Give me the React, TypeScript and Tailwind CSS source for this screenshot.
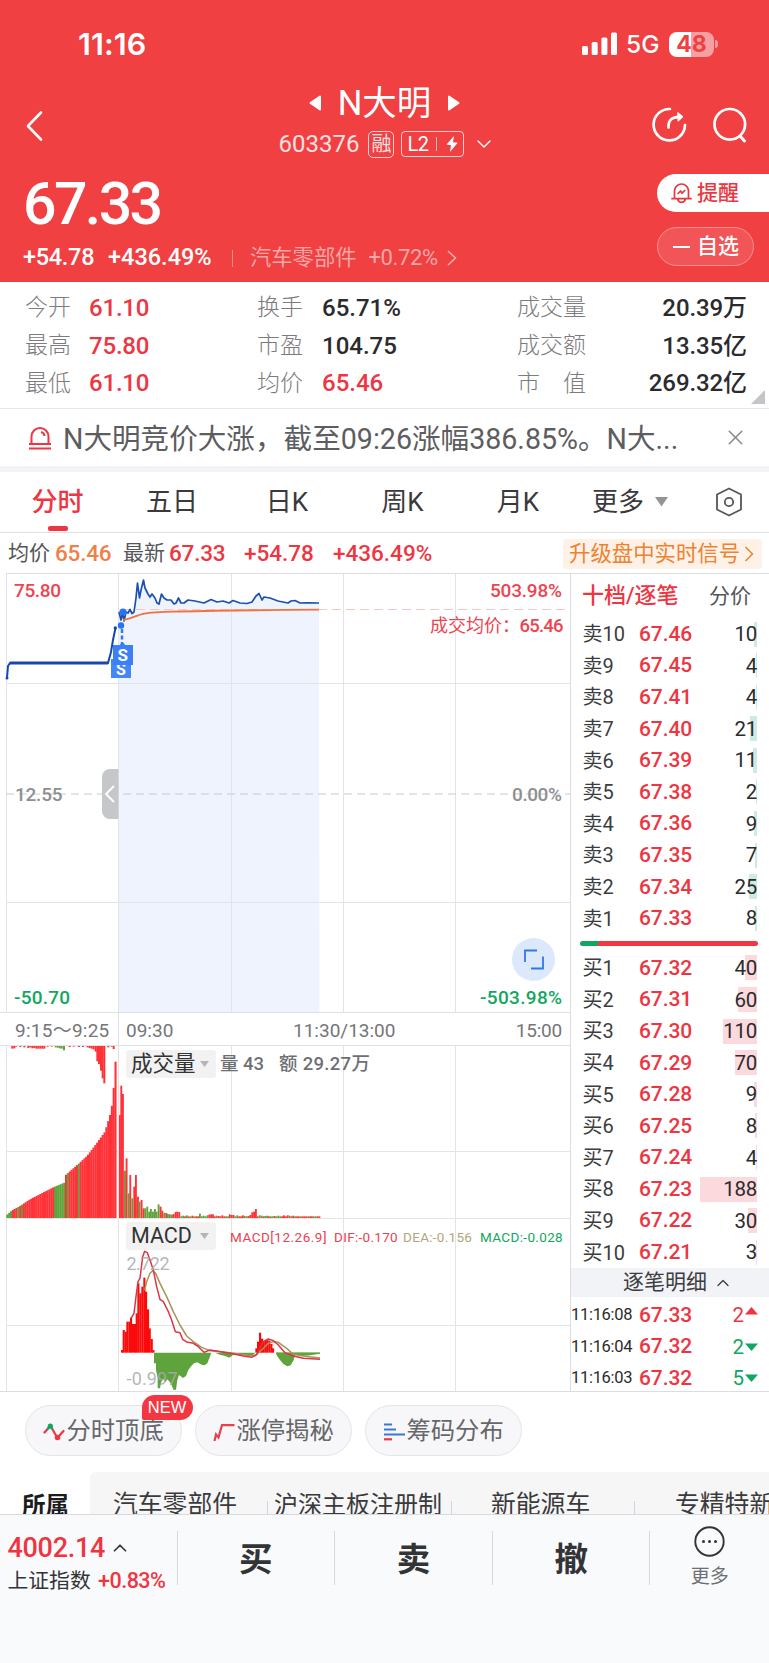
import { ChevronDown, ChevronUp, X } from "lucide-react";

type Level = { label: string; price: string; qty: string; bar: number };
type Bar = [number, number, string];

const RED = "#ff3237";
const GREEN = "#5fa33c";

const asks: Level[] = [
  { label: "卖10", price: "67.46", qty: "10", bar: 3 },
  { label: "卖9", price: "67.45", qty: "4", bar: 1 },
  { label: "卖8", price: "67.41", qty: "4", bar: 1 },
  { label: "卖7", price: "67.40", qty: "21", bar: 7 },
  { label: "卖6", price: "67.39", qty: "11", bar: 4 },
  { label: "卖5", price: "67.38", qty: "2", bar: 1 },
  { label: "卖4", price: "67.36", qty: "9", bar: 3 },
  { label: "卖3", price: "67.35", qty: "7", bar: 2 },
  { label: "卖2", price: "67.34", qty: "25", bar: 8 },
  { label: "卖1", price: "67.33", qty: "8", bar: 2 },
];

const bids: Level[] = [
  { label: "买1", price: "67.32", qty: "40", bar: 12 },
  { label: "买2", price: "67.31", qty: "60", bar: 19 },
  { label: "买3", price: "67.30", qty: "110", bar: 34 },
  { label: "买4", price: "67.29", qty: "70", bar: 22 },
  { label: "买5", price: "67.28", qty: "9", bar: 3 },
  { label: "买6", price: "67.25", qty: "8", bar: 2 },
  { label: "买7", price: "67.24", qty: "4", bar: 1 },
  { label: "买8", price: "67.23", qty: "188", bar: 57 },
  { label: "买9", price: "67.22", qty: "30", bar: 9 },
  { label: "买10", price: "67.21", qty: "3", bar: 1 },
];

const ticks = [
  { time: "11:16:08", price: "67.33", qty: "2", up: true },
  { time: "11:16:04", price: "67.32", qty: "2", up: false },
  { time: "11:16:03", price: "67.32", qty: "5", up: false },
];

// call auction: x, top of the bar
const auction = [
  [20, 585], [35, 572], [60, 558], [90, 538], [160, 502], [193, 488], [197, 465], [235, 432],
  [262, 407], [290, 370], [315, 335], [330, 285], [338, 245], [342, 190], [345, 125], [349, 125],
];

const auctionTop = (x: number) => {
  for (let i = 1; i < auction.length; i++) {
    const [x0, y0] = auction[i - 1];
    const [x1, y1] = auction[i];
    if (x <= x1) return y0 + ((y1 - y0) * (x - x0)) / (x1 - x0);
  }
  return 125;
};

const isGreen = (x: number) =>
  x < 33 || (x > 47 && x < 54) || (x > 59 && x < 66) || (x > 158 && x < 193) || (x > 197 && x < 203.500) || (x > 230 && x < 236);

const auctionBars: Bar[] = [];
for (let x = 19; x < 345; x += 5.5) {
  auctionBars.push([x, auctionTop(x + 3), isGreen(x) ? GREEN : RED]);
}

const hanging: Bar[] = [
  [34, 86, RED], [40, 85, RED], [46, 80, RED], [58, 81, RED], [70, 82, RED], [82, 84, RED], [88, 82, RED], [94, 85, RED],
  [100, 84, RED], [106, 86, RED], [112, 86, RED], [118, 86, RED], [124, 86, RED], [130, 86, RED], [140, 80, RED], [152, 80, RED],
  [164, 82, GREEN], [170, 83, GREEN], [176, 85, GREEN], [182, 86, GREEN], [189, 91, GREEN], [206, 81, RED], [218, 80, RED],
  [234, 81, RED], [246, 81, RED], [260, 82, RED], [266, 84, RED], [272, 86, RED], [278, 88, RED], [284, 95, RED], [289, 124, RED],
  [294, 132, RED], [300, 152, RED], [305, 175, RED], [310, 190, RED], [322, 82, RED], [332, 80, RED], [338, 87, RED],
];

const session: Bar[] = [
  [357, 285, RED], [361, 197, RED], [366, 222, RED], [372, 452, GREEN], [377, 415, RED], [383, 520, GREEN], [388, 465, RED],
  [394, 535, GREEN], [400, 500, RED], [405, 465, RED], [411, 530, RED], [416, 545, GREEN], [422, 540, RED], [428, 565, RED],
  [433, 565, GREEN], [439, 560, GREEN], [445, 575, GREEN], [450, 567, GREEN], [456, 575, GREEN], [462, 567, GREEN],
  [467, 575, GREEN], [473, 553, GREEN], [479, 560, RED], [484, 572, RED], [490, 578, GREEN], [496, 579, RED], [501, 582, GREEN],
  [507, 583, GREEN], [513, 584, GREEN], [518, 582, RED], [524, 576, RED], [529, 575, RED], [535, 576, RED],
];
const tail = "gg2rg3rgr2grrg8gg2gg3r5r6r6rg2r1rr3rggr6r4r4gg3rrr3g1gr1r4r12r14r22rg3g2rg1g2rggr1gg2grr3rr3g2rr2grrgrrrgrrggrr";
let tailX = 541;
for (let i = 0; i < tail.length && tailX < 956; i++) {
  if (/\d/.test(tail[i])) continue;
  const extra = parseInt(tail.slice(i + 1), 10) || 0;
  session.push([tailX, 589 - extra, tail[i] === "g" ? GREEN : RED]);
  tailX += 5.6;
}

const macdUp = [
  [363, 990], [368, 930], [374, 935], [379, 905], [385, 905], [390, 893], [396, 912], [402, 912], [407, 880], [412, 790],
  [418, 820], [424, 800], [430, 773], [435, 815], [441, 868], [446, 925], [452, 957], [457, 990],
  [766, 985], [771, 965], [777, 938], [783, 956], [788, 963], [794, 962], [799, 960], [805, 962], [811, 972], [816, 985],
];
const macdDown =
  "462,998 462,1030 468,1030 468,1050 473,1075 473,1105 480,1105 484,1085 490,1078 497,1087 502,1078 510,1087 516,1098 520,1109 528,1109 532,1080 537,1065 549,1074 558,1068 565,1050 572,1040 582,1030 592,1027 605,1034 614,1036 622,1030 628,1015 634,998 645,998 660,1004 675,1008 688,1013 700,1004 740,1005 752,1008 764,1002 764,998 828,998 830,1006 840,1020 850,1032 862,1039 872,1036 880,1022 886,1004 905,1008 930,1006 960,1001 960,998";

function Signal() {
  return (
    <svg className="h-[24px] w-[36px]" viewBox="0 0 36 24" fill="#fff">
      <rect x="0" y="14" width="6" height="9" rx="1.5" />
      <rect x="9.7" y="10" width="6" height="13" rx="1.5" />
      <rect x="19.4" y="5.4" width="6" height="17.6" rx="1.5" />
      <rect x="29" y="0.6" width="6" height="22.4" rx="1.5" />
    </svg>
  );
}

function Header() {
  return (
    <header className="flex h-[282px] flex-col bg-[#f04042] text-white">
      <div className="flex h-[88px] items-center justify-between pl-[78px] pr-[51px]">
        <span className="font-[Inter] text-[30.5px] font-semibold leading-none tracking-[0.1px]">11:16</span>
        <div className="flex items-center">
          <Signal />
          <span className="ml-[8px] w-[43px] font-[Inter] text-[24.5px] font-medium leading-none">5G</span>
          <div className="flex h-[25px] w-[45px] items-center justify-center rounded-[8px] bg-[linear-gradient(90deg,#fff_49%,#f8a0a1_49%)] font-[Inter] text-[23px] font-bold leading-none text-[#f04042]">
            48
          </div>
          <span className="ml-px h-[8px] w-[3px] rounded-r-full bg-[#f8a0a1]" />
        </div>
      </div>

      <div className="flex h-[78px]">
        <div className="flex w-[240px] items-center pb-[3px] pl-[14px]">
          <svg className="h-[32px] w-[40px]" viewBox="0 0 40 32" fill="none" stroke="#fff" strokeWidth="2.6" strokeLinecap="round" strokeLinejoin="round">
            <path d="M27 2.500 14 16 27 29.500" />
          </svg>
        </div>
        <div className="flex flex-1 flex-col items-center">
          <div className="flex h-[30px] items-center gap-[17px]">
            <svg className="h-[16px] w-[12px]" viewBox="0 0 12 16" fill="#fff" stroke="#fff" strokeWidth="2" strokeLinejoin="round">
              <path d="M11 1.5v13L1.5 8z" />
            </svg>
            <span className="whitespace-nowrap text-[34.5px] leading-none">N大明</span>
            <svg className="h-[16px] w-[12px]" viewBox="0 0 12 16" fill="#fff" stroke="#fff" strokeWidth="2" strokeLinejoin="round">
              <path d="M1 1.5v13L10.5 8z" />
            </svg>
          </div>
          <div className="mt-[12px] flex h-[28px] items-center pl-[6px]">
            <span className="text-[24px] leading-none text-[#fde0e0]">603376</span>
            <span className="ml-[9px] flex h-[27px] w-[26px] items-center justify-center rounded-[5px] border border-[#fbd0d0] text-[20px] leading-none text-[#fde0e0]">融</span>
            <span className="ml-[7px] flex h-[26px] w-[63px] items-center rounded-[4px] border border-[#fbd0d0] pl-[5px]">
              <span className="text-[20px] leading-none tracking-[-0.5px]">L2</span>
              <span className="ml-[8px] h-[14px] w-px bg-[#f9b5b5]" />
              <svg className="ml-[9px] h-[16px] w-[12px]" viewBox="0 0 12 16" fill="#fff">
                <path d="M8 0 0.5 8.5 5 9.2 4 16 11.7 6.8 7 6.2z" />
              </svg>
            </span>
            <ChevronDown className="ml-[8px] h-[24px] w-[24px]" strokeWidth={1.4} />
          </div>
        </div>
        <div className="flex w-[240px] items-center justify-end gap-[26px] pb-[4px] pr-[22px]">
          <svg className="h-[36px] w-[36px]" viewBox="0 0 36 36" fill="none" stroke="#fff" strokeWidth="2.7" strokeLinecap="round" strokeLinejoin="round">
            <path d="M19 2A15.7 15.7 0 1 0 34 18.2" />
            <path d="M17.500 20.500C17.200 13 20.500 10 29 9.800" />
            <path d="M27 5.700 32 9.700 27.300 14z" fill="#fff" strokeWidth="1" />
          </svg>
          <svg className="h-[36px] w-[34px]" viewBox="0 0 34 36" fill="none" stroke="#fff" strokeWidth="2.7" strokeLinecap="round">
            <circle cx="16.800" cy="17.300" r="15.300" />
            <path d="M27 29 31.500 34" strokeWidth="3" />
          </svg>
        </div>
      </div>

      <div className="flex h-[116px] justify-between">
        <div className="flex flex-col pl-[23px]">
          <span className="mt-[8px] text-[59px] font-medium leading-none tracking-[-2.6px]">67.33</span>
          <div className="mt-[8px] flex h-[34px] items-center leading-none">
            <span className="w-[85px] text-[23.5px] font-medium tracking-[-0.3px]">+54.78</span>
            <span className="w-[124px] text-[23.5px] font-medium">+436.49%</span>
            <span className="h-[17px] w-px bg-[#f88c8d]" />
            <span className="ml-[17px] text-[21.3px] text-[#f8a6a6]">汽车零部件</span>
            <span className="ml-[12px] w-[78px] text-[22px] tracking-[-0.4px] text-[#f8a6a6]">+0.72%</span>
            <svg className="h-[16px] w-[10px]" viewBox="0 0 10 16" fill="none" stroke="#fab0b0" strokeWidth="1.5">
              <path d="M1 1l7.5 7L1 15" />
            </svg>
          </div>
        </div>
        <div className="flex w-[112px] flex-col gap-[15px] pt-[8px] leading-none">
          <div className="flex h-[38px] items-center rounded-l-full bg-white pl-[14px] text-[21px] font-medium text-[#e93640]">
            <svg className="mr-[5px] h-[22px] w-[21px]" viewBox="0 0 21 22" fill="none" stroke="#e93640" strokeWidth="1.7" strokeLinecap="round" strokeLinejoin="round">
              <path d="M3.5 16V9a7 7 0 0 1 14 0v7M1 16.7h19M6.5 17c1.5 4.5 6.500 4.500 8 0" />
              <path d="M7 11.500l2.500-2.500 1.500 2.200 2.700-2.700" />
            </svg>
            提醒
          </div>
          <div className="flex h-[39px] w-[97px] items-center rounded-full border border-[#f78f90] bg-[#f25557] pl-[15px] text-[21px] font-medium">
            <span className="mr-[7px] h-[2px] w-[17px] bg-white" />
            自选
          </div>
        </div>
      </div>
    </header>
  );
}

function Stats() {
  const rows = [
    ["今开", "61.10", "换手", "65.71%", "成交量", "20.39万"],
    ["最高", "75.80", "市盈", "104.75", "成交额", "13.35亿"],
    ["最低", "61.10", "均价", "65.46", "市　值", "269.32亿"],
  ];
  return (
    <section className="relative h-[127px] border-b border-[#e6e7ea] pt-[7px]">
      {rows.map((r, i) => (
        <div key={r[0]} className="flex h-[37.700px] items-center pl-[25px] pr-[22px] text-[24px] font-medium leading-none">
          <span className="w-[64px] text-[23px] font-light text-[#7c7c7e]">{r[0]}</span>
          <span className="w-[168px] tracking-[-0.2px] text-[#ee3643]">{r[1]}</span>
          <span className="w-[65px] text-[23px] font-light text-[#7c7c7e]">{r[2]}</span>
          <span className={i === 2 ? "w-[195px] text-[#ee3643]" : "w-[195px] text-[#2b2b2d]"}>{r[3]}</span>
          <span className="w-[70px] whitespace-nowrap text-[23px] font-light text-[#7c7c7e]">{r[4]}</span>
          <span className="flex-1 whitespace-nowrap text-right tracking-[-0.1px] text-[#2b2b2d]">{r[5]}</span>
        </div>
      ))}
      <svg className="absolute bottom-[4px] right-[4px] h-[14px] w-[14px]" viewBox="0 0 14 14">
        <path d="M14 0v14H0z" fill="#c4c5c8" />
      </svg>
    </section>
  );
}

function Notice() {
  return (
    <section className="flex h-[63px] items-center border-b-[6px] border-[#f2f3f6] pl-[29px] pr-[25px]">
      <svg className="h-[24px] w-[22px]" viewBox="0 0 22 24" fill="none" stroke="#ee3643" strokeWidth="2">
        <path d="M2.500 17V10.500a8.500 8.500 0 0 1 17 0V17M0 18h22M0 22.500h22" />
        <path d="M12 6c2 .5 3.300 2 3.500 4" />
      </svg>
      <span className="ml-[12px] flex-1 whitespace-nowrap pt-[4px] text-[28.6px] leading-none text-[#5c5d61]">
        N大明竞价大涨，截至09:26涨幅386.85%。N大...
      </span>
      <X className="-mr-[4px] h-[25px] w-[25px] text-[#8a8b8e]" strokeWidth={1.5} />
    </section>
  );
}

function Tabs() {
  return (
    <nav className="flex h-[61px] items-center border-b border-[#dfe0e3] text-[26px] leading-none text-[#3a3a3c]">
      <div className="relative flex h-full w-[115px] items-center justify-center font-medium text-[#ee3643]">
        分时
        <span className="absolute bottom-[1px] left-[48px] h-[5px] w-[20px] rounded-[2px] bg-[#ee3643]" />
      </div>
      <span className="w-[114px] text-center">五日</span>
      <span className="w-[116px] text-center">日K</span>
      <span className="w-[115px] text-center">周K</span>
      <span className="w-[116px] text-center">月K</span>
      <span className="ml-[16px] w-[63px]">更多</span>
      <svg className="h-[10px] w-[13px]" viewBox="0 0 13 10">
        <path d="M0 0h13L6.500 9.500z" fill="#939497" />
      </svg>
      <svg className="ml-[47px] h-[30px] w-[28px]" viewBox="0 0 28 30" fill="none" stroke="#55565a" strokeWidth="1.8" strokeLinejoin="round">
        <path d="M14 1.500 26 7.500v15L14 28.500 2 22.500v-15z" />
        <circle cx="14" cy="15" r="4.200" />
      </svg>
    </nav>
  );
}

function InfoRow() {
  return (
    <div className="flex h-[40px] items-center pl-[8px] pr-[7px] pt-px text-[22.5px] font-medium leading-none text-[#ee3643]">
      <span className="w-[47px] text-[21px] font-normal text-[#55565a]">均价</span>
      <span className="w-[68px] tracking-[-0.2px] text-[#f0804a]">65.46</span>
      <span className="w-[46px] text-[21px] font-normal text-[#55565a]">最新</span>
      <span className="w-[75px] tracking-[-0.2px]">67.33</span>
      <span className="w-[89px]">+54.78</span>
      <span>+436.49%</span>
      <div className="ml-auto flex h-[30px] w-[199px] items-center rounded-[3px] bg-[#fef2e8] pl-[6px] text-[21.4px] font-normal text-[#f0812f]">
        升级盘中实时信号
        <svg className="ml-[4px] h-[16px] w-[10px]" viewBox="0 0 10 16" fill="none" stroke="#f0812f" strokeWidth="1.5">
          <path d="M1.500 1l7 7-7 7" />
        </svg>
      </div>
    </div>
  );
}

function PriceChart() {
  const line =
    "119,612 121,620 122.500,612 124,621 126,612 128,613 130,609.500 132,613.500 134,612 136,598 137.500,583 139.500,598 141,590 143.500,580 145,588 148,594 150,597 152,594 155,598 157,603 159,604 161.500,594 164,598 167,600 171,600 174,604 176,603 178.500,598 181,603 184,603 188,600 195,601 204,603 211,599.500 217,602 223,601 229,603 233,600.500 240,603 247,603.500 252,602 256,596 259,593.500 262,600 264,597 270,598 278,601 288,603 291,601 295,600.500 300,603 308,602.800 319,603";
  return (
    <svg className="block h-[439px] w-[570px]" viewBox="0 573 570 439" fontFamily="Roboto, 'Noto Sans CJK SC', sans-serif" fontSize="19" fontWeight="500">
      <path d={`M119,612 L${line} L319.500,1012 L119,1012z`} fill="#eef3fe" />
      <path d="M6.500 573V1012M118.500 573V1012M231.500 573V1012M343.500 573V1012M455.500 573V1012M6 683.500H570M6 902.500H570" stroke="#e3e4e8" />
      <path d="M6 573.500H570" stroke="#dcdde1" />
      <path d="M6 794H570" stroke="#c9cacc" strokeDasharray="8 5" />
      <path d="M122 609.500H570" stroke="#f5c6c3" strokeDasharray="9 5" />
      <polyline points="7,678 8,666 10,663 108,663 111,652 113,640 115.500,628" fill="none" stroke="#1549ad" strokeWidth="2" />
      <path d="M10 663H108" stroke="#1549ad" strokeWidth="3" />
      <circle cx="7" cy="678" r="1.500" fill="#1549ad" />
      <circle cx="115.300" cy="628" r="1.700" fill="#1549ad" />
      <polyline points={line} fill="none" stroke="#1b50b0" strokeWidth="1.700" strokeLinejoin="round" />
      <path d="M123 620C130 619 134 617 139 615 150 611.500 165 612 180 611.500 220 610.500 270 610 319 609.700" fill="none" stroke="#f2713f" strokeWidth="1.800" />
      <path d="M122 629V645" stroke="#2f7bf5" strokeWidth="2.500" strokeDasharray="4 2.500" />
      <circle cx="123" cy="612" r="3.600" fill="#2673f5" />
      <circle cx="121" cy="625.500" r="3.200" fill="#2673f5" />
      <path d="M118 647 122.500 642 127 647z" fill="#2f7bf5" />
      <rect x="111" y="659" width="20" height="19" fill="#4687f6" />
      <text x="116" y="675" fontSize="16" fontWeight="700" fill="#fff">S</text>
      <rect x="113" y="645" width="20" height="20" fill="#3b80f6" />
      <text x="117.500" y="661" fontSize="17" fontWeight="700" fill="#fff">S</text>
      <path d="M118.500 769h-8.500a8 8 0 0 0-8 8v34a8 8 0 0 0 8 8h8.500z" fill="#c6c7c9" />
      <path d="M114 786l-8 8 8 8" fill="none" stroke="#fff" strokeWidth="1.800" />
      <text x="14" y="596.500" textLength="47" fill="#ee4450">75.80</text>
      <text x="15" y="800.500" textLength="47.500" fill="#8e8f92">12.55</text>
      <text x="14" y="1004" textLength="56" fill="#12a760">-50.70</text>
      <text x="490" y="596.500" textLength="72" fill="#ee4450">503.98%</text>
      <text x="512" y="800.500" textLength="50" fill="#8e8f92">0.00%</text>
      <text x="480" y="1004" textLength="82" fill="#12a760">-503.98%</text>
      <text x="430" y="631.500" fontSize="18" fontWeight="400" fill="#ee4450">成交均价：</text>
      <text x="519.500" y="631.500" textLength="44" fontSize="18.500" fill="#ee4450">65.46</text>
      <circle cx="533.500" cy="959.500" r="21.500" fill="#dce8fb" />
      <path d="M525 962V950.500H537M543 956.500V968.500H531" fill="none" stroke="#2f78ea" strokeWidth="1.800" />
    </svg>
  );
}

function TimeAxis() {
  return (
    <div className="flex h-[34px] items-center border-y border-[#e0e1e5] text-[19px] leading-none text-[#75767a]">
      <span className="w-[118px] whitespace-nowrap pl-[15px] pt-[2px] tracking-[0.25px]">9:15～9:25</span>
      <div className="flex h-full flex-1 items-center justify-between border-l border-[#e0e1e5] pl-[7px] pr-[8px] pt-[2px]">
        <span className="w-[167px]">09:30</span>
        <span className="flex-1">11:30/13:00</span>
        <span className="tracking-[-0.2px]">15:00</span>
      </div>
    </div>
  );
}

function Selector({ label }: { label: string }) {
  return (
    <div className="absolute left-[126px] top-[4px] flex h-[28px] w-[90px] items-center justify-between rounded-[3px] bg-[#f2f2f3] pl-[5px] pr-[7px] text-[21.5px] leading-none text-[#333]">
      {label}
      <svg className="h-[6px] w-[9px]" viewBox="0 0 9 6">
        <path d="M0 0h9L4.500 6z" fill="#b4b5b8" />
      </svg>
    </div>
  );
}

function VolumeChart() {
  return (
    <div className="relative h-[172px]">
      <svg className="block h-[172px] w-[570px]" viewBox="0 1046 570 172">
        <path d="M6.500 1045V1218M118.500 1045V1218M231.500 1045V1218M343.500 1045V1218M455.500 1045V1218M6 1151.500H570" stroke="#e3e4e8" />
        <g transform="translate(0 1020) scale(0.33333)">
          {hanging.map(([x, y, c]) => (
            <rect key={x} x={x} y={74} width={6} height={y - 74} fill={c} />
          ))}
          {auctionBars.map(([x, y, c]) => (
            <rect key={x} x={x} y={y} width={6.2} height={595 - y} fill={c} />
          ))}
          {session.map(([x, y, c]) => (
            <rect key={x} x={x} y={y} width={5.6} height={595 - y} fill={c} />
          ))}
        </g>
      </svg>
      <Selector label="成交量" />
      <div className="absolute left-[220px] top-[9px] flex text-[18.5px] font-medium leading-none text-[#6e6f73]">
        <span className="w-[59px]">量 43</span>
        <span className="tracking-[0.3px]">额 29.27万</span>
      </div>
    </div>
  );
}

function MacdChart() {
  return (
    <div className="relative h-[174px] border-b border-[#dcdde1]">
      <svg className="block h-[173px] w-[570px]" viewBox="0 1218 570 173" fontFamily="Roboto, sans-serif">
        <path d="M6.500 1218V1392M118.500 1218V1392M231.500 1218V1392M343.500 1218V1392M455.500 1218V1392M6 1218.500H570M6 1325.500H570" stroke="#e3e4e8" />
        <g transform="translate(0 1020) scale(0.33333)">
          {macdUp.map(([x, y]) => (
            <rect key={x} x={x} y={y} width={6.4} height={998 - y} fill="#fa0a0a" />
          ))}
          <polygon points={macdDown} fill={GREEN} />
          <path d="M828 999H960" stroke={GREEN} strokeWidth="3" />
          <polyline
            points="434,810 440,785 450,760 458,752 467,760 480,790 500,830 520,875 540,915 560,948 580,965 605,982 630,992 690,998 730,1004 765,1008 790,985 805,970 820,965 835,967 860,985 880,1003 910,1008 960,1014"
            fill="none" stroke="#a8935a" strokeWidth="4.500" strokeLinejoin="round"
          />
          <polyline
            points="393,895 402,880 408,830 414,785 420,775 428,710 434,694 442,698 450,720 460,750 470,800 480,838 490,845 505,875 515,900 526,935 540,938 548,958 560,966 580,970 595,980 612,997 630,990 645,992 690,1000 730,1008 755,1012 770,1003 790,965 805,957 820,962 835,975 855,998 880,1008 910,1015 960,1018"
            fill="none" stroke="#dd3545" strokeWidth="4.500" strokeLinejoin="round"
          />
        </g>
        <text x="126.500" y="1270" textLength="43" fontSize="18" fill="#a9aaad" opacity="0.85">2.722</text>
        <text x="126.500" y="1385" textLength="51" fontSize="18" fill="#a9aaad" opacity="0.85">-0.997</text>
      </svg>
      <Selector label="MACD" />
      <div className="absolute left-[230px] top-[13px] flex whitespace-nowrap text-[13.5px] leading-none text-[#e94252]">
        <span className="w-[104px] tracking-[0.5px]">MACD[12.26.9]</span>
        <span className="w-[69px] tracking-[0.3px]">DIF:-0.170</span>
        <span className="w-[77px] tracking-[0.3px] text-[#b3a67c]">DEA:-0.156</span>
        <span className="tracking-[0.35px] text-[#12a760]">MACD:-0.028</span>
      </div>
    </div>
  );
}

function LevelRow({ level, buy }: { level: Level; buy?: boolean }) {
  return (
    <div className="relative flex h-[31.600px] shrink-0 items-center pl-[11.500px] pr-[12px] leading-none">
      <span className="w-[56.500px] text-[20px] text-[#3c3d40]">{level.label}</span>
      <span className="text-[21px] font-medium tracking-[-0.1px] text-[#ee3643]">{level.price}</span>
      <span
        className={buy ? "absolute right-[12px] top-[3px] h-[25px] bg-[#fbd9dc]" : "absolute right-[12px] top-[3px] h-[25px] bg-[#cdebe0]"}
        style={{ width: level.bar }}
      />
      <span className="relative ml-auto text-[20.5px] tracking-[-0.3px] text-[#2b2b2d]">{level.qty}</span>
    </div>
  );
}

function OrderBook() {
  return (
    <aside className="flex w-[199px] flex-col overflow-hidden border-b border-l border-t border-[#dcdde1]">
      <div className="flex h-[44.500px] shrink-0 items-center pl-[11px] leading-none">
        <span className="w-[127px] text-[22px] font-medium text-[#ee3643]">十档/逐笔</span>
        <span className="text-[21px] text-[#55565a]">分价</span>
      </div>
      {asks.map((l) => (
        <LevelRow key={l.label} level={l} />
      ))}
      <div className="flex h-[18px] shrink-0 items-center pl-[9px]">
        <span className="h-[5px] w-[178px] rounded-full bg-[linear-gradient(110deg,#12a760_10.500%,#f23743_10.500%)]" />
      </div>
      {bids.map((l) => (
        <LevelRow key={l.label} level={l} buy />
      ))}
      <div className="flex h-[29px] shrink-0 items-center bg-[#f2f3f6] pl-[52px] text-[21px] leading-none text-[#3c3d40]">
        逐笔明细
        <ChevronUp className="ml-[6px] h-[20px] w-[20px]" strokeWidth={1.5} />
      </div>
      <div className="shrink-0 pt-[2px]">
        {ticks.map((t) => (
          <div key={t.time} className="flex h-[31.600px] items-center leading-none">
            <span className="w-[68px] text-[16.500px] tracking-[-0.3px] text-[#2b2b2d]">{t.time}</span>
            <span className="text-[21px] font-medium tracking-[-0.1px] text-[#ee3643]">{t.price}</span>
            <span className={t.up ? "ml-auto text-[20.5px] text-[#ee3643]" : "ml-auto text-[20.5px] text-[#12a760]"}>{t.qty}</span>
            <svg className={t.up ? "mb-[8px] ml-px mr-[11px] h-[8px] w-[13px]" : "ml-px mr-[11px] h-[8px] w-[13px]"} viewBox="0 0 13 8">
              {t.up ? <path d="M0 7.500h13L6.500 0z" fill="#ee3643" /> : <path d="M0 .5h13L6.500 8z" fill="#12a760" />}
            </svg>
          </div>
        ))}
      </div>
    </aside>
  );
}

function Chips() {
  return (
    <div className="flex h-[80px] gap-[13px] pl-[24.500px] pt-[13px] text-[24.3px] leading-none text-[#66676b]">
      <div className="relative flex h-[51px] w-[157px] items-center rounded-full border border-[#e4e5e8] bg-[#f7f7f9] pl-[17px] pt-[2px]">
        <svg className="mr-[2px] h-[18px] w-[22px]" viewBox="0 0 22 18" fill="none" stroke="#ee3643" strokeWidth="2.200" strokeLinecap="round">
          <path d="M1.500 9.500 5 5.500M9 5.500 13 12.500M16 13l4.500-5" />
          <path d="M5 5.500 7.300 2.500 9 5.500" stroke="#12a760" />
          <circle cx="7.300" cy="3.200" r="2.600" fill="#12a760" stroke="none" />
          <circle cx="14.500" cy="14.500" r="2.800" fill="#ee3643" stroke="none" />
        </svg>
        分时顶底
        <span className="absolute -top-[11px] left-[116px] flex h-[25px] w-[51px] items-center justify-center rounded-t-[13px] rounded-br-[13px] rounded-bl-[2px] bg-[#f23743] font-['Liberation_Sans'] text-[16.5px] text-white">
          NEW
        </span>
      </div>
      <div className="flex h-[51px] w-[157px] items-center rounded-full border border-[#e4e5e8] bg-[#f7f7f9] pl-[17px] pt-[2px]">
        <svg className="mr-[2px] h-[18px] w-[22px]" viewBox="0 0 22 18" fill="none" stroke="#e8414c" strokeWidth="2.200">
          <path d="M1.500 18 3 11.500 5.500 14.500 9 2.200H21.500" />
        </svg>
        涨停揭秘
      </div>
      <div className="flex h-[51px] w-[157px] items-center rounded-full border border-[#e4e5e8] bg-[#f7f7f9] pl-[18px] pt-[2px]">
        <svg className="mr-[2px] h-[18px] w-[21px]" viewBox="0 0 21 18">
          <path d="M0 1.500h8M0 6.500h12M0 11.500h21" stroke="#3a76dd" strokeWidth="2.200" />
          <path d="M0 16.300h8" stroke="#ee3643" strokeWidth="2.200" />
        </svg>
        筹码分布
      </div>
    </div>
  );
}

function Sectors() {
  return (
    <div className="flex h-[42px] overflow-hidden whitespace-nowrap leading-none text-[#3a3a3c]">
      <span className="w-[90px] shrink-0 pl-[22px] pt-[23px] text-[23.5px] font-bold text-[#1c1c1e]">所属</span>
      <div className="flex w-[700px] shrink-0 items-start rounded-tl-[6px] bg-[#f6f6f7] pt-[21px] text-[24.8px]">
        <span className="w-[177px] pl-[23px]">汽车零部件</span>
        <span className="mt-[8px] h-[20px] w-px bg-[#d4d5d8]" />
        <span className="w-[183px] pl-[6px] text-[24px]">沪深主板注册制</span>
        <span className="mt-[8px] h-[20px] w-px bg-[#d4d5d8]" />
        <span className="w-[182px] pl-[39px]">新能源车</span>
        <span className="mt-[8px] h-[20px] w-px bg-[#d4d5d8]" />
        <span className="pl-[40px]">专精特新</span>
      </div>
    </div>
  );
}

function BottomBar() {
  return (
    <footer className="flex h-[149px] border-t border-[#d8d9dc] bg-[#f9fafc] pt-[16px] leading-none text-[#333436]">
      <div className="w-[176.500px] pl-[7.500px] pt-[2px]">
        <div className="flex h-[30px] items-center text-[27px] font-medium tracking-[-0.3px] text-[#ee3643]">
          4002.14
          <ChevronUp className="ml-[4px] h-[22px] w-[22px] text-[#333436]" strokeWidth={1.9} />
        </div>
        <div className="mt-[6px] flex h-[24px] items-center">
          <span className="w-[90.500px] text-[20.8px]">上证指数</span>
          <span className="text-[21.5px] font-medium tracking-[-0.5px] text-[#ee3643]">+0.83%</span>
        </div>
      </div>
      {["买", "卖", "撤"].map((t) => (
        <div key={t} className="flex h-[54px] w-[157.660px] items-center justify-center border-l border-[#d8d9dc] pt-[3px] text-[33.5px] font-bold">
          {t}
        </div>
      ))}
      <div className="flex h-[54px] flex-1 flex-col items-center border-l border-[#d8d9dc]">
        <svg className="-mt-[5px] h-[31px] w-[31px] shrink-0" viewBox="0 0 31 31" fill="none" stroke="#333436" strokeWidth="1.900">
          <circle cx="15.500" cy="15.500" r="14.200" />
          <g fill="#333436" stroke="none">
            <circle cx="9.500" cy="15.500" r="1.500" />
            <circle cx="15.500" cy="15.500" r="1.500" />
            <circle cx="21.500" cy="15.500" r="1.500" />
          </g>
        </svg>
        <span className="mt-[10px] text-[19px] text-[#6e6f73]">更多</span>
      </div>
    </footer>
  );
}

export default function App() {
  return (
    <main className="flex h-[1663px] w-[769px] flex-col overflow-hidden bg-white font-[Roboto,'Noto_Sans_CJK_SC',sans-serif]">
      <Header />
      <Stats />
      <Notice />
      <Tabs />
      <InfoRow />
      <div className="flex h-[819px]">
        <div className="w-[570px]">
          <PriceChart />
          <TimeAxis />
          <VolumeChart />
          <MacdChart />
        </div>
        <OrderBook />
      </div>
      <Chips />
      <Sectors />
      <BottomBar />
    </main>
  );
}
